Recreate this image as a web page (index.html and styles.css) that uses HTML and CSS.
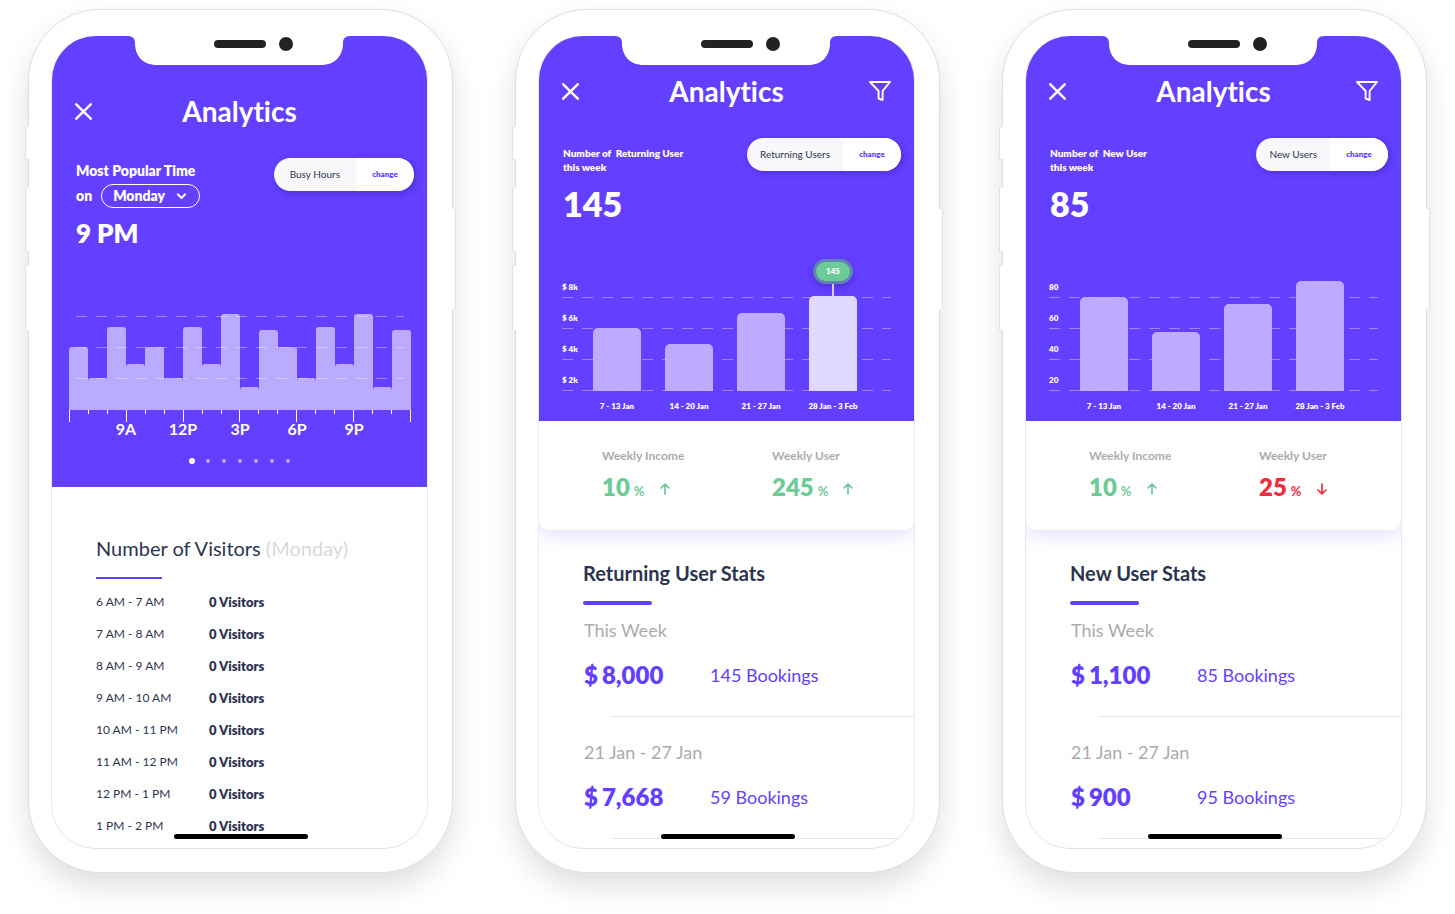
FILE: index.html
```html
<!DOCTYPE html>
<html lang="en">
<head>
<meta charset="utf-8">
<meta name="viewport" content="width=device-width, initial-scale=1">
<title>Analytics</title>
<link rel="stylesheet" href="styles.css">
</head>
<body>
<svg class="sprite" aria-hidden="true">
  <symbol id="close" viewBox="0 0 16 16"><path d="M1.2 1.2 14.8 14.8M14.8 1.2 1.2 14.8" fill="none" stroke="currentColor" stroke-width="2.3" stroke-linecap="round"/></symbol>
  <symbol id="filter" viewBox="0 0 22 20"><path d="M1 1H21L13.6 10V19L9.6 17.6V10Z" fill="none" stroke="currentColor" stroke-width="1.9" stroke-linejoin="round"/></symbol>
  <symbol id="chevron" viewBox="0 0 8 6"><path d="M.8 1 4 4.4 7.2 1" fill="none" stroke="currentColor" stroke-width="1.8" stroke-linecap="round" stroke-linejoin="round"/></symbol>
  <symbol id="arrow" viewBox="0 0 10 12"><path d="M5 11V1.2M1 5 5 1.2 9 5" fill="none" stroke="currentColor" stroke-width="1.7" stroke-linecap="round" stroke-linejoin="round"/></symbol>
  <symbol id="notch" viewBox="0 0 222 30"><path d="M0 0C5 0 7 3 7 7C7 20 15 29 29 29H193C207 29 215 20 215 7C215 3 217 0 222 0Z" fill="#fff"/><rect x="86" y="4" width="52" height="8" rx="4" fill="#222"/><circle cx="158" cy="8" r="7" fill="#222"/></symbol>
</svg>

<main class="gallery">

  <section class="phone" aria-label="Busy hours">
    <span class="key key-mute"></span><span class="key key-up"></span><span class="key key-down"></span><span class="key key-power"></span>
    <div class="screen">
      <svg class="notch" aria-hidden="true"><use href="#notch"/></svg>
      <header class="hero hero-tall">
        <div class="bar">
          <button class="icon-button" aria-label="Close"><svg class="icon-close"><use href="#close"/></svg></button>
          <h1 class="title">Analytics</h1>
        </div>
        <div class="summary">
          <div class="popular">
            <p class="popular-label">Most Popular Time</p>
            <div class="day-row">
              <label for="day">on</label>
              <div class="day-picker">
                <select id="day" class="day-select">
                  <option>Monday</option><option>Tuesday</option><option>Wednesday</option><option>Thursday</option><option>Friday</option><option>Saturday</option><option>Sunday</option>
                </select>
                <svg class="icon-chevron" aria-hidden="true"><use href="#chevron"/></svg>
              </div>
            </div>
            <p class="popular-time">9 PM</p>
          </div>
          <div class="switcher switcher-wide"><span class="switcher-label">Busy Hours</span><button class="switcher-button">change</button></div>
        </div>
        <div class="hours">
          <div class="hours-plot">
            <div class="hours-bars">
              <i style="height:63px"></i><i style="height:32px"></i><i style="height:83px"></i><i style="height:46px"></i><i style="height:63px"></i><i style="height:32px"></i><i style="height:83px"></i><i style="height:46px"></i><i style="height:96px"></i><i style="height:23px"></i><i style="height:80px"></i><i style="height:63px"></i><i style="height:32px"></i><i style="height:83px"></i><i style="height:46px"></i><i style="height:96px"></i><i style="height:23px"></i><i style="height:80px"></i>
            </div>
            <div class="hours-lines"><i></i><i></i><i></i></div>
          </div>
          <div class="ticks"><i></i><i></i><i></i><i></i><i></i><i></i><i></i><i></i><i></i><i></i><i></i><i></i><i></i><i></i><i></i><i></i><i></i><i></i><i></i></div>
          <div class="hours-labels"><span>9A</span><span>12P</span><span>3P</span><span>6P</span><span>9P</span></div>
        </div>
        <div class="pager">
          <button class="page-dot current" aria-label="Page 1"></button><button class="page-dot" aria-label="Page 2"></button><button class="page-dot" aria-label="Page 3"></button><button class="page-dot" aria-label="Page 4"></button><button class="page-dot" aria-label="Page 5"></button><button class="page-dot" aria-label="Page 6"></button><button class="page-dot" aria-label="Page 7"></button>
        </div>
      </header>
      <div class="visitors">
        <h2 class="visitors-title">Number of Visitors <span class="muted">(Monday)</span></h2>
        <table class="visitors-table">
          <tr><td>6 AM - 7 AM</td><th>0 Visitors</th></tr>
          <tr><td>7 AM - 8 AM</td><th>0 Visitors</th></tr>
          <tr><td>8 AM - 9 AM</td><th>0 Visitors</th></tr>
          <tr><td>9 AM - 10 AM</td><th>0 Visitors</th></tr>
          <tr><td>10 AM - 11 PM</td><th>0 Visitors</th></tr>
          <tr><td>11 AM - 12 PM</td><th>0 Visitors</th></tr>
          <tr><td>12 PM - 1 PM</td><th>0 Visitors</th></tr>
          <tr><td>1 PM - 2 PM</td><th>0 Visitors</th></tr>
        </table>
      </div>
      <span class="home-bar"></span>
    </div>
  </section>

  <section class="phone" aria-label="Returning users">
    <span class="key key-mute"></span><span class="key key-up"></span><span class="key key-down"></span><span class="key key-power"></span>
    <div class="screen">
      <svg class="notch" aria-hidden="true"><use href="#notch"/></svg>
      <header class="hero">
        <div class="bar">
          <button class="icon-button" aria-label="Close"><svg class="icon-close"><use href="#close"/></svg></button>
          <h1 class="title">Analytics</h1>
          <button class="icon-button icon-end" aria-label="Filter"><svg class="icon-filter"><use href="#filter"/></svg></button>
        </div>
        <div class="summary">
          <div class="count">
            <p class="count-label">Number of&nbsp; Returning User<br>this week</p>
            <p class="count-value">145</p>
          </div>
          <div class="switcher"><span class="switcher-label">Returning Users</span><button class="switcher-button">change</button></div>
        </div>
        <div class="weeks">
          <div class="weeks-plot">
            <div class="weeks-scale"><span>$ 8k</span><span>$ 6k</span><span>$ 4k</span><span>$ 2k</span></div>
            <div class="weeks-bars">
              <div class="week"><i class="week-bar" style="height:63px"></i></div>
              <div class="week"><i class="week-bar" style="height:47px"></i></div>
              <div class="week"><i class="week-bar" style="height:78px"></i></div>
              <div class="week"><span class="badge">145</span><i class="stem"></i><i class="week-bar active" style="height:95px"></i></div>
            </div>
          </div>
          <div class="weeks-labels"><span>7 - 13 Jan</span><span>14 - 20 Jan</span><span>21 - 27 Jan</span><span>28 Jan - 3 Feb</span></div>
        </div>
      </header>
      <div class="trends">
        <div class="trend"><p class="trend-label">Weekly Income</p><p class="trend-value up"><strong>10</strong><span>%</span><svg class="icon-arrow"><use href="#arrow"/></svg></p></div>
        <div class="trend"><p class="trend-label">Weekly User</p><p class="trend-value up"><strong>245</strong><span>%</span><svg class="icon-arrow"><use href="#arrow"/></svg></p></div>
      </div>
      <div class="stats">
        <h2 class="stats-title">Returning User Stats</h2>
        <div class="stat"><p class="stat-period">This Week</p><p class="stat-row"><strong class="amount"><span>$</span><span>8,000</span></strong><span>145 Bookings</span></p></div>
        <div class="stat"><p class="stat-period">21 Jan - 27 Jan</p><p class="stat-row"><strong class="amount"><span>$</span><span>7,668</span></strong><span>59 Bookings</span></p></div>
      </div>
      <span class="home-bar"></span>
    </div>
  </section>

  <section class="phone" aria-label="New users">
    <span class="key key-mute"></span><span class="key key-up"></span><span class="key key-down"></span><span class="key key-power"></span>
    <div class="screen">
      <svg class="notch" aria-hidden="true"><use href="#notch"/></svg>
      <header class="hero">
        <div class="bar">
          <button class="icon-button" aria-label="Close"><svg class="icon-close"><use href="#close"/></svg></button>
          <h1 class="title">Analytics</h1>
          <button class="icon-button icon-end" aria-label="Filter"><svg class="icon-filter"><use href="#filter"/></svg></button>
        </div>
        <div class="summary">
          <div class="count">
            <p class="count-label">Number of&nbsp; New User<br>this week</p>
            <p class="count-value">85</p>
          </div>
          <div class="switcher"><span class="switcher-label">New Users</span><button class="switcher-button">change</button></div>
        </div>
        <div class="weeks">
          <div class="weeks-plot">
            <div class="weeks-scale"><span>80</span><span>60</span><span>40</span><span>20</span></div>
            <div class="weeks-bars">
              <div class="week"><i class="week-bar" style="height:94px"></i></div>
              <div class="week"><i class="week-bar" style="height:59px"></i></div>
              <div class="week"><i class="week-bar" style="height:87px"></i></div>
              <div class="week"><i class="week-bar" style="height:110px"></i></div>
            </div>
          </div>
          <div class="weeks-labels"><span>7 - 13 Jan</span><span>14 - 20 Jan</span><span>21 - 27 Jan</span><span>28 Jan - 3 Feb</span></div>
        </div>
      </header>
      <div class="trends">
        <div class="trend"><p class="trend-label">Weekly Income</p><p class="trend-value up"><strong>10</strong><span>%</span><svg class="icon-arrow"><use href="#arrow"/></svg></p></div>
        <div class="trend"><p class="trend-label">Weekly User</p><p class="trend-value down"><strong>25</strong><span>%</span><svg class="icon-arrow"><use href="#arrow"/></svg></p></div>
      </div>
      <div class="stats">
        <h2 class="stats-title">New User Stats</h2>
        <div class="stat"><p class="stat-period">This Week</p><p class="stat-row"><strong class="amount"><span>$</span><span>1,100</span></strong><span>85 Bookings</span></p></div>
        <div class="stat"><p class="stat-period">21 Jan - 27 Jan</p><p class="stat-row"><strong class="amount"><span>$</span><span>900</span></strong><span>95 Bookings</span></p></div>
      </div>
      <span class="home-bar"></span>
    </div>
  </section>

</main>
</body>
</html>
```
FILE: styles.css
```css
:root {
  --purple: #633fff;
  --ink: #2c3550;
  --grey: #ababad;
  --green: #6dcb98;
  --red: #f02d3e;
  --dash: repeating-linear-gradient(90deg, rgba(255, 255, 255, .36) 0 11px, transparent 11px 20px);
}

* { box-sizing: border-box; }

body {
  margin: 0;
  background: #fff;
  color: var(--ink);
  font-family: Lato, "Open Sans", sans-serif;
  font-variant-ligatures: none;
}

h1, h2, p { margin: 0; }

button, select {
  margin: 0;
  padding: 0;
  border: 0;
  background: none;
  color: inherit;
  font: inherit;
  cursor: pointer;
}

svg { display: block; }
.sprite { position: absolute; width: 0; height: 0; }

.gallery {
  display: grid;
  grid-template-columns: repeat(auto-fit, minmax(400px, 1fr));
  gap: 62px;
  padding: 9px 28px 41px;
}

/* Device frame */
.phone {
  position: relative;
  display: flex;
  padding: 26px 25px 24px 23px;
  border: 1px solid #dededf;
  border-radius: 72px;
  background: #fff;
  box-shadow: 0 14px 28px rgba(25, 35, 50, .14);
}

.key {
  position: absolute;
  left: -4px;
  width: 4px;
  border: 1px solid #e2e2e3;
  border-right-color: #fff;
  border-radius: 2px 0 0 2px;
  background: #fff;
}
.key-mute { top: 116px; height: 34px; }
.key-up { top: 177px; height: 65px; }
.key-down { top: 255px; height: 66px; }
.key-power {
  top: 198px;
  right: -4px;
  left: auto;
  height: 102px;
  border-color: #e2e2e3;
  border-left-color: #fff;
  border-radius: 0 2px 2px 0;
}

.screen {
  position: relative;
  flex: 1;
  min-width: 0;
  overflow: hidden;
  border-radius: 44px;
  background: #fff;
  box-shadow: 1px 0 0 #e9e9ea, -1px 0 0 #e9e9ea, 0 1px 0 #e0e0e2;
}

.notch {
  position: absolute;
  top: 0;
  left: calc(50% - 112px);
  width: 222px;
  height: 30px;
}

.home-bar {
  position: absolute;
  bottom: 9px;
  left: calc(50% - 66px);
  width: 134px;
  height: 5px;
  border-radius: 3px;
  background: #000;
}

/* Purple header */
.hero {
  padding: 38px 23px 9px;
  background: var(--purple);
  color: #fff;
}
.hero-tall { padding: 58px 16px 17px; }

.bar {
  display: grid;
  grid-template-columns: 24px 1fr 24px;
  align-items: center;
}
.hero-tall .bar { padding: 0 7px; }

.title {
  font-size: 28px;
  line-height: 34px;
  font-weight: 700;
  text-align: center;
}

.icon-button { justify-self: start; }
.icon-end { justify-self: end; }
.icon-close { width: 17px; height: 17px; }
.icon-filter { width: 22px; height: 20px; }

.summary {
  display: flex;
  justify-content: space-between;
  align-items: flex-start;
  margin: 30px -10px 0 1px;
}
.hero-tall .summary { margin: 30px -3px 0 8px; }

.popular { padding-top: 3px; font-size: 14px; line-height: 20px; font-weight: 800; }
.day-row { display: flex; align-items: center; gap: 9px; margin-top: 3px; }
.day-picker { display: grid; grid-template-columns: minmax(0, 1fr); align-items: center; width: 99px; }
.day-select {
  grid-area: 1 / 1;
  width: 100%;
  height: 24px;
  padding: 0 24px 1px 11px;
  border: 1px solid #fff;
  border-radius: 12px;
  appearance: none;
}
.day-select option { color: var(--ink); }
.icon-chevron {
  grid-area: 1 / 1;
  justify-self: end;
  width: 9px;
  height: 7px;
  margin-right: 14px;
  pointer-events: none;
}
.popular-time { margin-top: 8px; font-size: 26px; line-height: 34px; font-weight: 800; }

.count { padding-top: 8px; }
.count-label { font-size: 10px; line-height: 14px; font-weight: 800; }
.count-value { margin-top: 10px; font-size: 34px; line-height: 40px; font-weight: 800; }

.switcher {
  display: flex;
  border-radius: 17px;
  background: #f8f8fa;
  color: var(--ink);
  line-height: 33px;
  box-shadow: 2px 2px 6px rgba(40, 20, 140, .35);
}
.switcher-label { padding: 0 13px; font-size: 10px; white-space: nowrap; }
.switcher-wide .switcher-label { padding: 0 16px; }
.switcher-button {
  width: 58px;
  border-radius: 0 17px 17px 0;
  background: #fff;
  color: var(--purple);
  font-size: 8px;
  font-weight: 800;
}

/* Hourly chart */
.hours { margin: 64px 0 0 1px; }
.hours-plot { display: grid; align-items: end; }
.hours-bars { grid-area: 1 / 1; display: flex; align-items: flex-end; }
.hours-bars i { flex: 1; border-radius: 3px 3px 0 0; background: #bbabff; }
.hours-lines { grid-area: 1 / 1; padding: 0 7px 1px; }
.hours-lines i { display: block; height: 31px; background: var(--dash) top / 100% 1px no-repeat; }
.ticks { display: flex; justify-content: space-between; height: 12px; }
.ticks i { width: 1px; height: 4px; background: #fff; }
.ticks i:nth-child(3n + 1) { height: 12px; }
.hours-labels {
  display: grid;
  grid-template-columns: repeat(5, 1fr);
  padding: 0 8.33%;
  font-size: 16px;
  line-height: 14px;
  font-weight: 700;
  text-align: center;
}

.pager { display: flex; justify-content: center; padding-top: 16px; }
.page-dot { display: grid; place-items: center; width: 16px; height: 18px; }
.page-dot::before { width: 4px; height: 4px; border-radius: 50%; background: #bbabff; content: ""; }
.page-dot.current::before { width: 6px; height: 6px; background: #fff; }

/* Weekly chart */
.weeks { margin-top: 43px; font-size: 8px; font-weight: 800; }
.weeks-plot { display: grid; align-items: end; height: 124px; }
.weeks-scale { grid-area: 1 / 1; line-height: 40px; }
.weeks-scale span { display: block; height: 31px; background: var(--dash) bottom / 100% 1px no-repeat; }
.weeks-bars, .weeks-labels {
  display: grid;
  grid-template-columns: repeat(4, minmax(0, 1fr));
  gap: 24px;
  padding: 0 34px 0 31px;
}
.weeks-bars { grid-area: 1 / 1; align-items: end; height: 124px; }
.week { display: flex; flex-direction: column; justify-content: flex-end; align-items: center; height: 124px; }
.week-bar { width: 100%; flex: none; border-radius: 5px 5px 0 0; background: rgba(195, 180, 255, .93); }
.week-bar.active { background: #e0d9ff; }
.stem { flex: none; width: 2px; height: 12px; background: #d9d0ff; }
.badge {
  flex: none;
  width: 40px;
  border: 3px solid #5f83b5;
  border-radius: 13px;
  background: var(--green);
  line-height: 19px;
  text-align: center;
  box-shadow: 0 3px 6px rgba(40, 20, 140, .35);
}
.weeks-labels { padding-top: 9px; line-height: 12px; white-space: nowrap; }
.weeks-labels span { display: flex; justify-content: center; }

/* Trend card */
.trends {
  display: grid;
  grid-template-columns: 170px 1fr;
  padding: 26px 20px 23px 63px;
  border-radius: 0 0 10px 10px;
  background: #fff;
  box-shadow: 0 6px 18px rgba(99, 63, 255, .16);
}
.trend-label { color: var(--grey); font-size: 12px; line-height: 18px; font-weight: 700; }
.trend-value { display: flex; align-items: baseline; gap: 4px; margin-top: 6px; font-size: 13px; line-height: 32px; font-weight: 700; }
.trend-value strong { font-size: 24px; font-weight: 800; }
.trend-value.up { color: var(--green); }
.trend-value.down { color: var(--red); }
.icon-arrow { align-self: center; width: 10px; height: 12px; margin-left: 11px; }
.down .icon-arrow { transform: rotate(180deg); }

/* Visitor list */
.visitors { padding: 48px 44px 6px; }
.visitors-title { font-size: 20px; line-height: 26px; font-weight: 400; }
.visitors-title::after { display: block; width: 66px; height: 2px; margin: 16px 0 7px; background: var(--purple); content: ""; }
.muted { color: #d8d9dd; }
.visitors-table { border-collapse: collapse; font-size: 12px; line-height: 32px; text-align: left; white-space: nowrap; }
.visitors-table td { width: 113px; padding: 0; }
.visitors-table th { padding: 0; font-size: 13px; font-weight: 800; }

/* User stats */
.stats { padding: 31px 0 9px 44px; }
.stats-title { font-size: 20px; line-height: 24px; font-weight: 700; }
.stats-title::after { display: block; width: 69px; height: 4px; margin: 16px 0 13px; border-radius: 2px; background: var(--purple); content: ""; }
.stat { padding-left: 1px; font-size: 18px; line-height: 24px; }
.stat + .stat { padding-top: 23px; }
.stat::after { display: block; height: 1px; margin: 25px 0 0 27px; background: #e6e6ea; content: ""; }
.stat-period { color: var(--grey); }
.stat-row { display: grid; grid-template-columns: 126px 1fr; align-items: center; margin-top: 17px; color: var(--purple); line-height: 32px; }
.amount { display: flex; gap: 4px; font-size: 24px; font-weight: 800; }
```
